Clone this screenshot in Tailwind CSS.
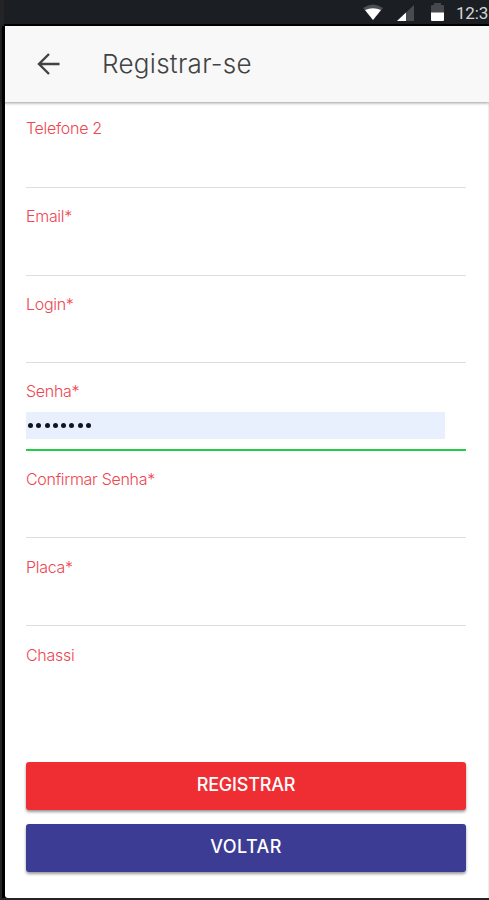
<!DOCTYPE html>
<html lang="pt-BR">
  <head>
    <meta charset="UTF-8" />
    <meta name="viewport" content="width=device-width, initial-scale=1.0" />
    <title>Registrar-se</title>
    <script src="https://cdn.jsdelivr.net/npm/@tailwindcss/browser@4"></script>
  </head>
  <body class="bg-[#242426] overflow-hidden font-['Inter',sans-serif]">
    <div class="h-[900px] flex flex-col pl-[2px] pb-[2px]">
      <!-- STATUS BAR -->
      <div class="h-[26px] shrink-0 flex items-center bg-[#1b1f24] border-b-2 border-black ml-[2px]">
        <div class="flex items-center ml-auto w-[126px] h-full text-[#d5d7d8] whitespace-nowrap">
          <svg class="w-[20px] h-[16px] shrink-0" viewBox="0 0 20 16">
            <path d="M0 4Q10-3 20 4L10 16Z" fill="#4c5054" />
            <path d="M2 6Q10 2.500 18 6L10 16Z" fill="#fff" />
          </svg>
          <svg class="w-[17px] h-[16px] ml-[14px] mt-px shrink-0" viewBox="0 0 17 16">
            <path d="M0 16L17 0V16Z" fill="#484c50" />
            <path d="M0 16L9 7.500V16Z" fill="#fff" />
          </svg>
          <svg class="w-[13px] h-[19px] ml-[17px] shrink-0" viewBox="0 0 13 19">
            <path d="M0 3Q0 2 1 2H3V0H10V2H12Q13 2 13 3V10H0Z" fill="#45494d" />
            <path d="M0 9.500H13V17Q13 18 12 18H1Q0 18 0 17Z" fill="#fff" />
          </svg>
          <span class="ml-[12px] mt-[3px] text-[17px] tracking-[-0.2px] font-['Roboto',sans-serif]">12:3</span>
        </div>
      </div>

      <!-- HEADER -->
      <div class="relative h-[76px] shrink-0 flex items-center border-l-[3px] border-black pl-[32px] bg-[#f8f8f8] shadow-[0_1px_3px_rgba(0,0,0,0.4)]">
        <svg class="w-[23px] h-[22px]" viewBox="0 0 23 22" fill="none" stroke="#424242" stroke-width="2.4">
          <path d="M22.500 11H2M12 1L2 11L12 21" />
        </svg>
        <h1 class="ml-[42px] -mt-px text-[26px] font-light tracking-[0.3px] text-[#424242]">Registrar-se</h1>
      </div>

      <!-- FORM -->
      <div class="grow flex bg-black pl-[3px]">
        <form class="grow flex flex-col bg-white rounded-bl-[3px] pl-[21px] pr-[22px] border-r border-[#eeeeee] text-[16px] font-light tracking-[-0.3px] text-[#ee4650]">
          <div class="h-[86px] shrink-0 border-b border-[#dedede] pt-[14px]">
            <label class="block">Telefone 2</label>
          </div>
          <div class="h-[87.6px] shrink-0 border-b border-[#dedede] pt-[16px]">
            <label class="block">Email*</label>
          </div>
          <div class="h-[87.6px] shrink-0 border-b border-[#dedede] pt-[16px]">
            <label class="block">Login*</label>
          </div>
          <div class="h-[87.6px] shrink-0 border-b-2 border-[#22cc44] pt-[16px]">
            <label class="block">Senha*</label>
            <div class="mt-[9px] mr-[21px] h-[27px] bg-[#e8f0fd] flex items-center gap-[3.300px] pl-[2px]">
              <i class="size-[5px] rounded-full bg-[#111522]"></i>
              <i class="size-[5px] rounded-full bg-[#111522]"></i>
              <i class="size-[5px] rounded-full bg-[#111522]"></i>
              <i class="size-[5px] rounded-full bg-[#111522]"></i>
              <i class="size-[5px] rounded-full bg-[#111522]"></i>
              <i class="size-[5px] rounded-full bg-[#111522]"></i>
              <i class="size-[5px] rounded-full bg-[#111522]"></i>
              <i class="size-[5px] rounded-full bg-[#111522]"></i>
            </div>
          </div>
          <div class="h-[87.6px] shrink-0 border-b border-[#dedede] pt-[16px]">
            <label class="block">Confirmar Senha*</label>
          </div>
          <div class="h-[87.6px] shrink-0 border-b border-[#dedede] pt-[16.600px]">
            <label class="block">Placa*</label>
          </div>
          <div class="pt-[16.600px]">
            <label class="block">Chassi</label>
          </div>

          <div class="mt-auto mb-[26px] flex flex-col gap-[14px] text-[18px] font-medium text-white">
            <button type="button" class="h-[48px] pb-[3px] rounded-[3px] bg-[#ef2e34] tracking-[-0.2px] shadow-[0_2px_3px_rgba(0,0,0,0.4)]">REGISTRAR</button>
            <button type="button" class="h-[48px] pb-[3px] rounded-[3px] bg-[#3c3c94] tracking-[0.4px] shadow-[0_2px_3px_rgba(0,0,0,0.4)]">VOLTAR</button>
          </div>
        </form>
      </div>
    </div>
  </body>
</html>
